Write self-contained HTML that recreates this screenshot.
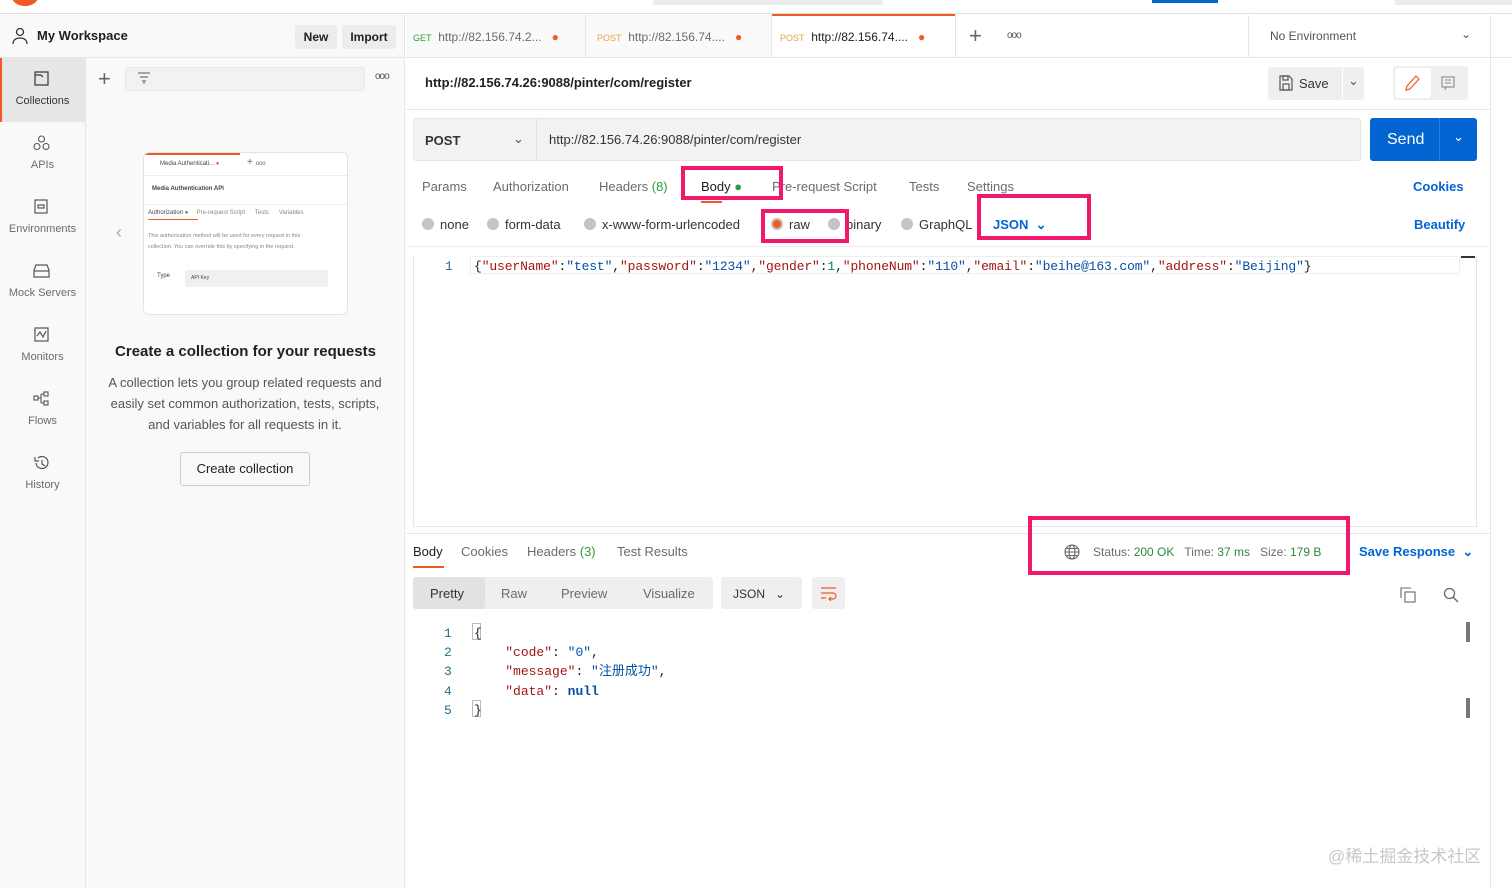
<!DOCTYPE html>
<html><head><meta charset="utf-8"><style>
*{margin:0;padding:0;box-sizing:border-box}
body{width:1512px;height:888px;overflow:hidden;background:#fff;font-family:"Liberation Sans","Noto Sans CJK SC",sans-serif;color:#212121;font-size:13px;position:relative}
.a{position:absolute}
.mono{font-family:"Liberation Mono","Noto Sans CJK SC",monospace}
.gray{color:#6b6b6b}
.nav{width:85px;text-align:center;font-size:11px;color:#6b6b6b}
.box{border:4px solid #f0196b}
.radio{display:inline-block;width:12px;height:12px;border-radius:50%;background:#c4c4c4;vertical-align:-1px;margin-right:6px}
.k{color:#a31515}.s{color:#0451a5}
</style></head><body>
<div class="a" style="left:0;top:0;width:1512px;height:14px;background:#fff;border-bottom:1px solid #e0e0e0"></div>
<div class="a" style="left:12px;top:-12px;width:26px;height:18px;border-radius:50%;background:#ef5b25"></div>
<div class="a" style="left:653px;top:0;width:230px;height:5px;background:#ececec"></div>
<div class="a" style="left:1152px;top:0;width:66px;height:3px;background:#0265d2"></div>
<div class="a" style="left:1395px;top:0;width:117px;height:5px;background:#ececec"></div>
<div class="a" style="left:0;top:15px;width:405px;height:873px;background:#f9f9f9;border-right:1px solid #e6e6e6"></div>
<div class="a" style="left:0;top:57px;width:405px;height:1px;background:#e6e6e6"></div>
<div class="a" style="left:85px;top:57px;width:1px;height:831px;background:#e6e6e6"></div>
<svg class="a" style="left:12px;top:27px" width="16" height="18" viewBox="0 0 16 18" fill="none" stroke="#333" stroke-width="1.3"><circle cx="8" cy="5" r="3.5"/><path d="M1 17c0-4 3-6 7-6s7 2 7 6"/></svg>
<div class="a" style="left:37px;top:28px;font-size:13px;font-weight:bold">My Workspace</div>
<div class="a" style="left:295px;top:25px;width:42px;height:24px;background:#ececec;border-radius:3px;font-weight:bold;font-size:12px;text-align:center;line-height:24px">New</div>
<div class="a" style="left:342px;top:25px;width:54px;height:24px;background:#ececec;border-radius:3px;font-weight:bold;font-size:12px;text-align:center;line-height:24px">Import</div>
<div class="a" style="left:0;top:58px;width:85px;height:64px;background:#e6e6e6;border-left:2px solid #ef5b25"></div>
<svg class="a" style="left:34px;top:71px" width="15" height="15" fill="none" stroke="#333" stroke-width="1.2"><rect x="1" y="1" width="13" height="13"/><path d="M1 4h6l2 2"/></svg>
<div class="a nav" style="left:0;top:95px;color:#333">Collections</div>
<svg class="a" style="left:33px;top:135px" width="17" height="16" fill="none" stroke="#555" stroke-width="1.1"><circle cx="8.5" cy="4" r="3"/><circle cx="4" cy="11.5" r="3"/><circle cx="13" cy="11.5" r="3"/></svg>
<div class="a nav" style="left:0;top:159px">APIs</div>
<svg class="a" style="left:34px;top:199px" width="15" height="16" fill="none" stroke="#555" stroke-width="1.2"><rect x="1" y="1" width="12" height="13"/><rect x="4" y="6" width="6" height="3"/></svg>
<div class="a nav" style="left:0;top:223px">Environments</div>
<svg class="a" style="left:33px;top:264px" width="17" height="14" fill="none" stroke="#555" stroke-width="1.2"><path d="M3 1h11l2 5v7H1V6z"/><path d="M1 7h15"/></svg>
<div class="a nav" style="left:0;top:287px">Mock Servers</div>
<svg class="a" style="left:34px;top:327px" width="15" height="15" fill="none" stroke="#555" stroke-width="1.2"><rect x="1" y="1" width="13" height="13"/><path d="M3 9l3-4 3 5 3-6"/></svg>
<div class="a nav" style="left:0;top:351px">Monitors</div>
<svg class="a" style="left:33px;top:391px" width="17" height="15" fill="none" stroke="#555" stroke-width="1.1"><rect x="1" y="5" width="4" height="4"/><rect x="11" y="1" width="4" height="4"/><rect x="11" y="10" width="4" height="4"/><path d="M5 7h3M8 3v9M8 3h3M8 12h3"/></svg>
<div class="a nav" style="left:0;top:415px">Flows</div>
<svg class="a" style="left:33px;top:455px" width="17" height="16" fill="none" stroke="#555" stroke-width="1.2"><path d="M3 8a6 6 0 1 0 2-5"/><path d="M2 2v4h4"/><path d="M9 5v4l3 2"/></svg>
<div class="a nav" style="left:0;top:479px">History</div>
<div class="a" style="left:98px;top:66px;font-size:22px;color:#666;font-weight:300">+</div>
<div class="a" style="left:125px;top:67px;width:240px;height:24px;background:#f2f2f2;border:1px solid #e8e8e8;border-radius:3px"></div>
<svg class="a" style="left:137px;top:72px" width="14" height="12" stroke="#555" stroke-width="1.1"><path d="M1 1h12M3 5h8M5 9h4M6 11h2"/></svg>
<div class="a" style="left:375px;top:71px;font-size:10px;color:#555;letter-spacing:-1px">ooo</div>
<div class="a" style="left:116px;top:222px;color:#aaa;font-size:18px">‹</div>
<div class="a" style="left:143px;top:152px;width:205px;height:163px;background:#fff;border:1px solid #e3e3e3;border-radius:6px;font-size:6px;color:#444;overflow:hidden">
 <div class="a" style="left:0;top:0;width:96px;height:2px;background:#ef5b25"></div>
 <div class="a" style="left:16px;top:8px">Media Authenticati... <span style="color:#ef5b25">●</span></div>
 <div class="a" style="left:103px;top:4px;font-size:10px;color:#666">+ <span style="font-size:6px">ooo</span></div>
 <div class="a" style="left:0;top:22px;width:205px;height:1px;background:#eee"></div>
 <div class="a" style="left:8px;top:33px;font-weight:bold">Media Authentication API</div>
 <div class="a" style="left:0;top:51px;width:205px;height:1px;background:#eee"></div>
 <div class="a" style="left:4px;top:57px">Authorization <span style="color:#2a9d3a">●</span> &nbsp;&nbsp;&nbsp;&nbsp;<span style="color:#888">Pre-request Script &nbsp;&nbsp;&nbsp;&nbsp; Tests &nbsp;&nbsp;&nbsp;&nbsp; Variables</span></div>
 <div class="a" style="left:4px;top:66px;width:50px;height:1px;background:#ef5b25"></div>
 <div class="a" style="left:4px;top:78px;color:#888;line-height:11px;font-size:5.5px">This authorization method will be used for every request in this<br>collection. You can override this by specifying in the request.</div>
 <div class="a" style="left:13px;top:120px">Type</div>
 <div class="a" style="left:41px;top:117px;width:143px;height:17px;background:#f0f0f0;border-radius:2px;padding:5px 6px;font-size:5px">API Key</div>
</div>
<div class="a" style="left:86px;top:343px;width:319px;text-align:center;font-size:15px;font-weight:bold">Create a collection for your requests</div>
<div class="a" style="left:99px;top:372px;width:292px;text-align:center;font-size:13px;line-height:21px;color:#555">A collection lets you group related requests and easily set common authorization, tests, scripts, and variables for all requests in it.</div>
<div class="a" style="left:180px;top:452px;width:130px;height:34px;border:1px solid #ccc;border-radius:3px;background:#f9f9f9;text-align:center;line-height:32px;font-size:13px">Create collection</div>

<div class="a" style="left:406px;top:57px;width:1106px;height:1px;background:#e6e6e6"></div>
<div class="a" style="left:406px;top:15px;width:180px;height:42px;border-right:1px solid #e6e6e6;background:#fafafa"></div>
<div class="a" style="left:586px;top:15px;width:186px;height:42px;border-right:1px solid #e6e6e6;background:#fafafa"></div>
<div class="a" style="left:772px;top:14px;width:183px;height:2px;background:#ef5b25"></div>
<div class="a" style="left:955px;top:15px;width:1px;height:42px;background:#e6e6e6"></div>
<div class="a" style="left:413px;top:30px;font-size:12px"><span style="color:#2a9d3a;font-size:9px">GET</span>&nbsp; <span class="gray">http://82.156.74.2...</span> &nbsp;&nbsp;<span style="color:#ef5b25">●</span></div>
<div class="a" style="left:597px;top:30px;font-size:12px"><span style="color:#e8a04a;font-size:9px">POST</span>&nbsp; <span class="gray">http://82.156.74....</span> &nbsp;&nbsp;<span style="color:#ef5b25">●</span></div>
<div class="a" style="left:780px;top:30px;font-size:12px"><span style="color:#e8a04a;font-size:9px">POST</span>&nbsp; <span>http://82.156.74....</span> &nbsp;&nbsp;<span style="color:#ef5b25">●</span></div>
<div class="a" style="left:969px;top:23px;font-size:22px;color:#666;font-weight:300">+</div>
<div class="a" style="left:1007px;top:30px;font-size:10px;color:#555;letter-spacing:-1px">ooo</div>
<div class="a" style="left:1248px;top:15px;width:1px;height:42px;background:#e6e6e6"></div>
<div class="a" style="left:1270px;top:29px;font-size:12px;color:#555">No Environment</div>
<div class="a" style="left:1461px;top:27px;font-size:12px;color:#555">⌄</div>
<div class="a" style="left:1490px;top:15px;width:1px;height:873px;background:#e6e6e6"></div>
<div class="a" style="left:425px;top:75px;font-size:13px;font-weight:bold">http://82.156.74.26:9088/pinter/com/register</div>
<div class="a" style="left:1268px;top:67px;width:96px;height:33px;background:#efefef;border-radius:3px"></div>
<div class="a" style="left:1342px;top:67px;width:1px;height:33px;background:#fff"></div>
<svg class="a" style="left:1279px;top:75px" width="14" height="16" fill="none" stroke="#555" stroke-width="1.2"><path d="M1 1h9l3 3v11H1z"/><rect x="4" y="1" width="5" height="4"/><rect x="4" y="9" width="6" height="6"/></svg>
<div class="a" style="left:1299px;top:76px;font-size:13px;color:#333">Save</div>
<div class="a" style="left:1348px;top:73px;color:#555">⌄</div>
<div class="a" style="left:1393px;top:66px;width:75px;height:34px;background:#efefef;border-radius:3px"></div>
<div class="a" style="left:1395px;top:68px;width:36px;height:30px;background:#fff;border-radius:3px"></div>
<svg class="a" style="left:1405px;top:75px" width="15" height="16" fill="none" stroke="#ef5b25" stroke-width="1.2"><path d="M11 1l3 3-9 10-4 1 1-4z"/></svg>
<svg class="a" style="left:1441px;top:76px" width="14" height="14" fill="none" stroke="#888" stroke-width="1.1"><rect x="1" y="1" width="12" height="10"/><path d="M4 4h6M4 7h6M5 11l-1 3"/></svg>
<div class="a" style="left:406px;top:109px;width:1084px;height:1px;background:#e6e6e6"></div>
<div class="a" style="left:413px;top:118px;width:948px;height:43px;background:#f2f2f2;border:1px solid #e6e6e6;border-radius:3px"></div>
<div class="a" style="left:536px;top:118px;width:1px;height:43px;background:#e0e0e0"></div>
<div class="a" style="left:425px;top:133px;font-size:13px;font-weight:bold;color:#333">POST</div>
<div class="a" style="left:513px;top:131px;color:#555">⌄</div>
<div class="a" style="left:549px;top:132px;font-size:13px;color:#333">http://82.156.74.26:9088/pinter/com/register</div>
<div class="a" style="left:1370px;top:118px;width:107px;height:43px;background:#0265d2;border-radius:3px"></div>
<div class="a" style="left:1439px;top:118px;width:1px;height:43px;background:#2a7fdc"></div>
<div class="a" style="left:1387px;top:131px;color:#fff;font-size:16px">Send</div>
<div class="a" style="left:1453px;top:129px;color:#fff">⌄</div>
<div class="a gray" style="left:422px;top:179px;font-size:13px">Params</div>
<div class="a gray" style="left:493px;top:179px;font-size:13px">Authorization</div>
<div class="a gray" style="left:599px;top:179px;font-size:13px">Headers <span style="color:#2a9d3a">(8)</span></div>
<div class="a" style="left:701px;top:179px;font-size:13px">Body <span style="color:#2a9d3a">●</span></div>
<div class="a" style="left:701px;top:201px;width:21px;height:2px;background:#ef5b25"></div>
<div class="a gray" style="left:772px;top:179px;font-size:13px">Pre-request Script</div>
<div class="a gray" style="left:909px;top:179px;font-size:13px">Tests</div>
<div class="a gray" style="left:967px;top:179px;font-size:13px">Settings</div>
<div class="a" style="left:1413px;top:179px;font-size:13px;color:#0265d2;font-weight:bold">Cookies</div>
<div class="a box" style="left:681px;top:166px;width:102px;height:34px"></div>
<div class="a" style="left:422px;top:217px;font-size:13px;color:#333"><span class="radio"></span>none</div>
<div class="a" style="left:487px;top:217px;font-size:13px;color:#333"><span class="radio"></span>form-data</div>
<div class="a" style="left:584px;top:217px;font-size:13px;color:#333"><span class="radio"></span>x-www-form-urlencoded</div>
<div class="a" style="left:771px;top:217px;font-size:13px;color:#333"><span class="radio" style="background:#ef5b25;box-shadow:0 0 0 2px #c4c4c4 inset"></span>raw</div>
<div class="a" style="left:828px;top:217px;font-size:13px;color:#333"><span class="radio"></span>binary</div>
<div class="a" style="left:901px;top:217px;font-size:13px;color:#333"><span class="radio"></span>GraphQL</div>
<div class="a" style="left:993px;top:217px;font-size:13px;color:#0265d2;font-weight:bold">JSON &nbsp;⌄</div>
<div class="a" style="left:1414px;top:217px;font-size:13px;color:#0265d2;font-weight:bold">Beautify</div>
<div class="a box" style="left:761px;top:209px;width:88px;height:34px"></div>
<div class="a box" style="left:977px;top:194px;width:114px;height:46px"></div>
<div class="a" style="left:406px;top:246px;width:1084px;height:1px;background:#eee"></div>
<div class="a" style="left:413px;top:255px;width:1064px;height:272px;border:1px solid #e6e6e6;border-top:none"></div>
<div class="a" style="left:470px;top:256px;width:990px;height:18px;border:1px solid #eee"></div>
<div class="a" style="left:1461px;top:256px;width:14px;height:2px;background:#333"></div>
<div class="a mono" style="left:445px;top:259px;font-size:13px;color:#2a6c8c">1</div>
<div class="a mono" style="left:474px;top:259px;font-size:13px;white-space:nowrap;letter-spacing:-0.12px">{<span class="k">"userName"</span>:<span class="s">"test"</span>,<span class="k">"password"</span>:<span class="s">"1234"</span>,<span class="k">"gender"</span>:<span style="color:#098658">1</span>,<span class="k">"phoneNum"</span>:<span class="s">"110"</span>,<span class="k">"email"</span>:<span class="s">"beihe@163.com"</span>,<span class="k">"address"</span>:<span class="s">"Beijing"</span>}</div>
<div class="a" style="left:406px;top:533px;width:1084px;height:1px;background:#e6e6e6"></div>
<div class="a" style="left:413px;top:544px;font-size:13px">Body</div>
<div class="a" style="left:413px;top:566px;width:31px;height:2px;background:#ef5b25"></div>
<div class="a gray" style="left:461px;top:544px;font-size:13px">Cookies</div>
<div class="a gray" style="left:527px;top:544px;font-size:13px">Headers <span style="color:#2a9d3a">(3)</span></div>
<div class="a gray" style="left:617px;top:544px;font-size:13px">Test Results</div>
<svg class="a" style="left:1064px;top:544px" width="16" height="16" fill="none" stroke="#666" stroke-width="1.1"><circle cx="8" cy="8" r="7"/><ellipse cx="8" cy="8" rx="3" ry="7"/><path d="M1 8h14M2 4.5h12M2 11.5h12"/></svg>
<div class="a gray" style="left:1093px;top:545px;font-size:12px">Status: <span style="color:#2a8a3a">200 OK</span> &nbsp;&nbsp;Time: <span style="color:#2a8a3a">37 ms</span> &nbsp;&nbsp;Size: <span style="color:#2a8a3a">179 B</span></div>
<div class="a" style="left:1359px;top:544px;font-size:13px;color:#0265d2;font-weight:bold">Save Response &nbsp;⌄</div>
<div class="a box" style="left:1028px;top:516px;width:322px;height:59px"></div>
<div class="a" style="left:413px;top:577px;width:300px;height:32px;background:#efefef;border-radius:3px"></div>
<div class="a" style="left:413px;top:577px;width:72px;height:32px;background:#e2e2e2;border-radius:3px"></div>
<div class="a" style="left:430px;top:586px;font-size:13px;color:#333">Pretty</div>
<div class="a gray" style="left:501px;top:586px;font-size:13px">Raw</div>
<div class="a gray" style="left:561px;top:586px;font-size:13px">Preview</div>
<div class="a gray" style="left:643px;top:586px;font-size:13px">Visualize</div>
<div class="a" style="left:721px;top:577px;width:81px;height:32px;background:#efefef;border-radius:3px"></div>
<div class="a" style="left:733px;top:587px;font-size:12px;color:#333">JSON &nbsp;&nbsp;⌄</div>
<div class="a" style="left:812px;top:577px;width:33px;height:32px;background:#efefef;border-radius:3px"></div>
<svg class="a" style="left:820px;top:586px" width="17" height="15" fill="none" stroke="#ef5b25" stroke-width="1.2"><path d="M1 2h15M1 7h12a3 3 0 0 1 0 6h-4M11 11l-2 2 2 2M1 12h5"/></svg>
<svg class="a" style="left:1400px;top:587px" width="16" height="16" fill="none" stroke="#666" stroke-width="1.1"><rect x="5" y="5" width="10" height="10"/><path d="M11 1H1v10"/></svg>
<svg class="a" style="left:1443px;top:587px" width="16" height="16" fill="none" stroke="#666" stroke-width="1.3"><circle cx="6.5" cy="6.5" r="5"/><path d="M10 10l5 5"/></svg>
<div class="a mono" style="left:444px;top:624px;font-size:13px;line-height:19.2px;color:#2a6c8c;text-align:right">1<br>2<br>3<br>4<br>5</div>
<div class="a" style="left:472px;top:623px;width:9px;height:17px;border:1px solid #bbb"></div>
<div class="a" style="left:472px;top:700px;width:9px;height:17px;border:1px solid #bbb"></div>
<div class="a mono" style="left:474px;top:624px;font-size:13px;line-height:19.2px;white-space:pre">{
    <span class="k">"code"</span>: <span class="s">"0"</span>,
    <span class="k">"message"</span>: <span class="s">"注册成功"</span>,
    <span class="k">"data"</span>: <span style="color:#0451a5;font-weight:bold">null</span>
}</div>
<div class="a" style="left:1466px;top:622px;width:4px;height:20px;background:#777"></div>
<div class="a" style="left:1466px;top:698px;width:4px;height:20px;background:#777"></div>
<div class="a" style="left:1328px;top:842px;font-size:17px;color:#c8c8c8">@稀土掘金技术社区</div>
</body></html>
